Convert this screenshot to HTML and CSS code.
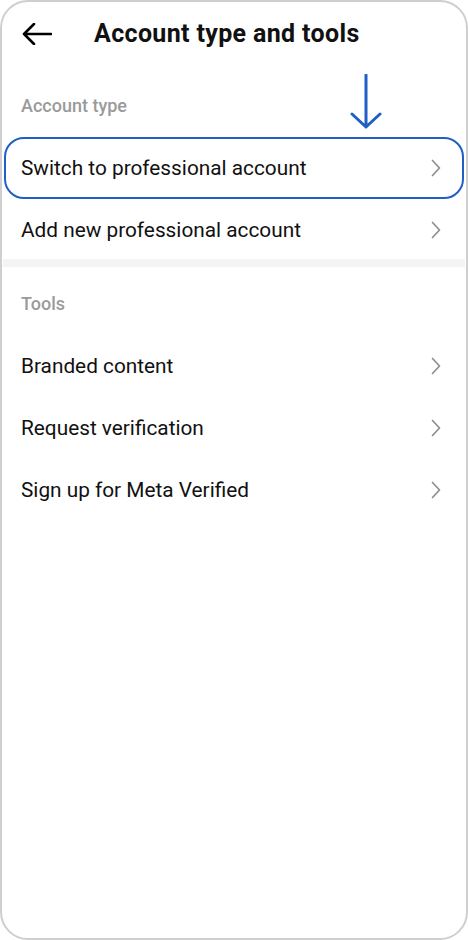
FILE: index.html
```html
<!DOCTYPE html>
<html lang="en">
<head>
    <meta charset="UTF-8">
    <meta name="viewport" content="width=device-width, initial-scale=1.0">
    <title>Account type and tools</title>
    <link rel="stylesheet" href="styles.css">
</head>
<body>
    <div class="phone">
        <header class="top-bar">
            <button class="back" aria-label="Back">
                <svg width="30" height="22" viewBox="0 0 30 22">
                    <path d="M2 11 H29 M12 1 L2 11 L12 21" fill="none" stroke="#000" stroke-width="2.6" stroke-linecap="round" stroke-linejoin="round"/>
                </svg>
            </button>
            <h1>Account type and tools</h1>
        </header>

        <section class="group">
            <h2 class="group-title">Account type</h2>
            <ul class="menu">
                <li class="menu-item highlighted">
                    <span>Switch to professional account</span>
                    <svg class="chevron" width="10" height="18" viewBox="0 0 10 18"><path d="M1.5 1.5 L8.5 9 L1.5 16.5" fill="none" stroke="#8e8e8e" stroke-width="1.7" stroke-linecap="round" stroke-linejoin="round"/></svg>
                </li>
                <li class="menu-item">
                    <span>Add new professional account</span>
                    <svg class="chevron" width="10" height="18" viewBox="0 0 10 18"><path d="M1.5 1.5 L8.5 9 L1.5 16.5" fill="none" stroke="#8e8e8e" stroke-width="1.7" stroke-linecap="round" stroke-linejoin="round"/></svg>
                </li>
            </ul>
        </section>

        <div class="divider"></div>

        <section class="group">
            <h2 class="group-title">Tools</h2>
            <ul class="menu">
                <li class="menu-item">
                    <span>Branded content</span>
                    <svg class="chevron" width="10" height="18" viewBox="0 0 10 18"><path d="M1.5 1.5 L8.5 9 L1.5 16.5" fill="none" stroke="#8e8e8e" stroke-width="1.7" stroke-linecap="round" stroke-linejoin="round"/></svg>
                </li>
                <li class="menu-item">
                    <span>Request verification</span>
                    <svg class="chevron" width="10" height="18" viewBox="0 0 10 18"><path d="M1.5 1.5 L8.5 9 L1.5 16.5" fill="none" stroke="#8e8e8e" stroke-width="1.7" stroke-linecap="round" stroke-linejoin="round"/></svg>
                </li>
                <li class="menu-item">
                    <span>Sign up for Meta Verified</span>
                    <svg class="chevron" width="10" height="18" viewBox="0 0 10 18"><path d="M1.5 1.5 L8.5 9 L1.5 16.5" fill="none" stroke="#8e8e8e" stroke-width="1.7" stroke-linecap="round" stroke-linejoin="round"/></svg>
                </li>
            </ul>
        </section>

        <!-- pointer drawn over the screenshot -->
        <svg class="pointer" width="32" height="56" viewBox="0 0 32 56">
            <path d="M16 1 V53 M2 40 L16 53 L30 40" fill="none" stroke="#1f5fc6" stroke-width="3" stroke-linecap="round" stroke-linejoin="round"/>
        </svg>
    </div>
</body>
</html>
```

FILE: styles.css
```css
:root {
    --text-color: #111;
    --muted-color: #9a9a9a;
    --accent-color: #1f5fc6;
    --frame-color: #cfcfcf;
}

* {
    box-sizing: border-box;
}

body {
    margin: 0;
    font-family: Roboto, 'Noto Sans', sans-serif;
    color: var(--text-color);
    background-color: white;
}

.phone {
    position: relative;
    width: 468px;
    height: 940px;
    border: 2px solid var(--frame-color);
    border-radius: 28px;
    overflow: hidden;
    background-color: white;
}

.top-bar {
    display: flex;
    align-items: center;
    height: 67px;
    padding: 0 0 4px 20px;
}

.back {
    display: flex;
    padding: 0;
    border: none;
    background: none;
    margin-right: 42px;
}

h1 {
    margin: 0;
    font-size: 25px;
    font-weight: 700;
    letter-spacing: 0.35px;
}

.group-title {
    margin: 0;
    padding: 27px 19px 21px;
    font-size: 18px;
    line-height: 20px;
    font-weight: 500;
    color: var(--muted-color);
}

.menu {
    list-style: none;
    margin: 0;
    padding: 0;
}

.menu-item {
    display: flex;
    align-items: center;
    justify-content: space-between;
    height: 62px;
    padding: 0 21px 0 15px;
    font-size: 20.8px;
    border: 2px solid transparent;
    margin: 0 2px;
    border-radius: 20px;
}

.menu-item.highlighted {
    border-color: var(--accent-color);
}

.chevron {
    flex-shrink: 0;
}

.divider {
    height: 8px;
    margin: -2px 1px 0;
    background-color: #f4f4f4;
}

.pointer {
    position: absolute;
    left: 348px;
    top: 72px;
}
```
